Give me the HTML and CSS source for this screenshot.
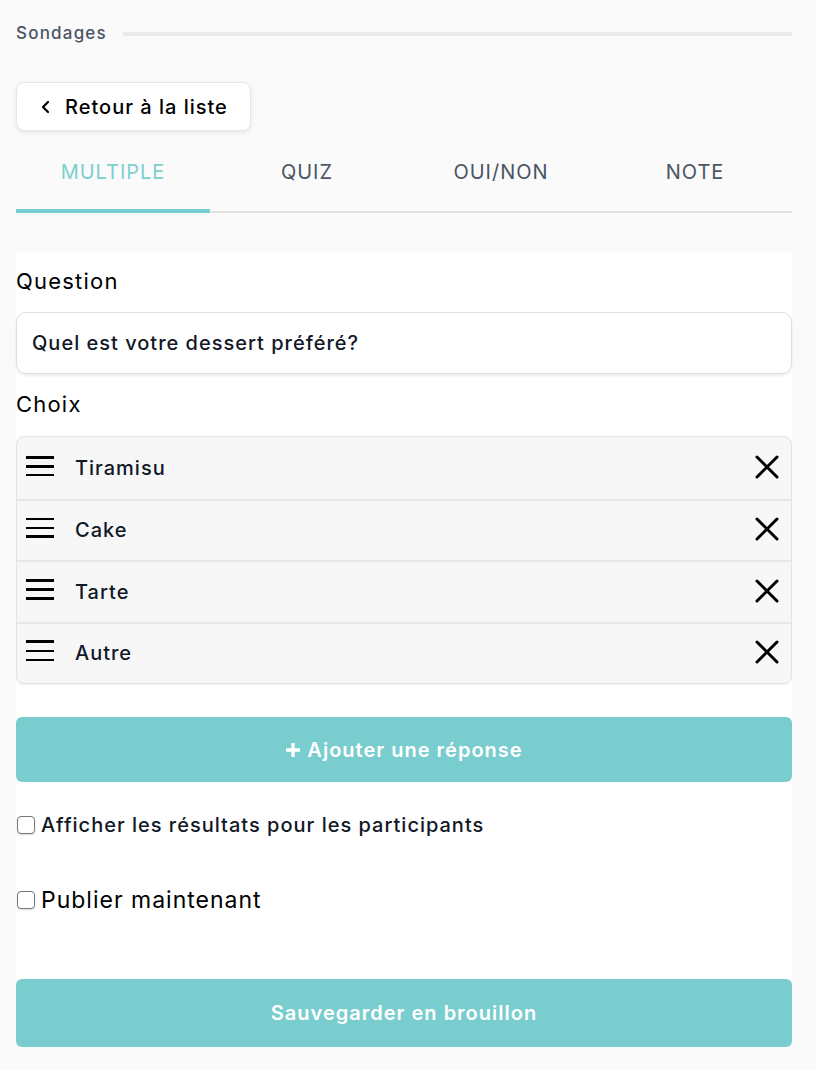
FILE: index.html
```html
<!DOCTYPE html>
<html lang="fr">
<head>
<meta charset="utf-8">
<link rel="stylesheet" href="styles.css">
</head>
<body>
<div class="page">
  <div class="section-head">
    <span class="section-title">Sondages</span>
    <span class="section-rule"></span>
  </div>

  <button class="back-btn">
    <svg width="12" height="14" viewBox="0 0 12 14"><path d="M8 2 L3 7 L8 12" fill="none" stroke="#000" stroke-width="2.2" stroke-linecap="round" stroke-linejoin="round"/></svg>
    <span>Retour à la liste</span>
  </button>

  <div class="tabs">
    <div class="tab active">MULTIPLE</div>
    <div class="tab">QUIZ</div>
    <div class="tab">OUI/NON</div>
    <div class="tab">NOTE</div>
  </div>

  <div class="panel">
    <div class="label">Question</div>
    <div class="input">Quel est votre dessert préféré?</div>
    <div class="label label-choix">Choix</div>
    <div class="choices">
      <div class="choice">
        <svg class="grip" width="28" height="24" viewBox="0 0 28 24"><rect x="0" y="4" width="28" height="3"/><rect x="0" y="13" width="28" height="3"/><rect x="0" y="22" width="28" height="2.5"/></svg>
        <span class="choice-text">Tiramisu</span>
        <svg class="close" width="24" height="24" viewBox="0 0 24 24"><path d="M2 2 L22 22 M22 2 L2 22" stroke="#000" stroke-width="3" stroke-linecap="round"/></svg>
      </div>
      <div class="choice">
        <svg class="grip" width="28" height="24" viewBox="0 0 28 24"><rect x="0" y="4" width="28" height="2"/><rect x="0" y="13" width="28" height="2"/><rect x="0" y="21" width="28" height="3"/></svg>
        <span class="choice-text">Cake</span>
        <svg class="close" width="24" height="24" viewBox="0 0 24 24"><path d="M2 2 L22 22 M22 2 L2 22" stroke="#000" stroke-width="3" stroke-linecap="round"/></svg>
      </div>
      <div class="choice">
        <svg class="grip" width="28" height="24" viewBox="0 0 28 24"><rect x="0" y="3" width="28" height="3"/><rect x="0" y="12" width="28" height="3"/><rect x="0" y="21" width="28" height="3"/></svg>
        <span class="choice-text">Tarte</span>
        <svg class="close" width="24" height="24" viewBox="0 0 24 24"><path d="M2 2 L22 22 M22 2 L2 22" stroke="#000" stroke-width="3" stroke-linecap="round"/></svg>
      </div>
      <div class="choice">
        <svg class="grip" width="28" height="24" viewBox="0 0 28 24"><rect x="0" y="3" width="28" height="3"/><rect x="0" y="13" width="28" height="2"/><rect x="0" y="22" width="28" height="2"/></svg>
        <span class="choice-text">Autre</span>
        <svg class="close" width="24" height="24" viewBox="0 0 24 24"><path d="M2 2 L22 22 M22 2 L2 22" stroke="#000" stroke-width="3" stroke-linecap="round"/></svg>
      </div>
    </div>

    <button class="teal-btn add-btn">
      <svg width="16" height="16" viewBox="0 0 16 16"><path d="M8 1 V15 M1 8 H15" stroke="#fff" stroke-width="3.4"/></svg>
      <span>Ajouter une réponse</span>
    </button>

    <label class="check check-1"><span class="box"></span><span>Afficher les résultats pour les participants</span></label>
    <label class="check check-2"><span class="box"></span><span>Publier maintenant</span></label>
  </div>

  <button class="teal-btn save-btn">Sauvegarder en brouillon</button>
</div>
</body>
</html>
```

FILE: styles.css
```css
* { box-sizing: border-box; }
html, body { margin: 0; padding: 0; }
body {
  background: #fafafa;
  font-family: Inter, "Noto Sans", sans-serif;
  color: #111827;
  letter-spacing: 1px;
}
.page {
  width: 776px;
  margin: 0 0 0 16px;
  padding-top: 22px;
}
.section-head {
  display: flex;
  align-items: center;
  gap: 16px;
  height: 22px;
}
.section-title {
  font-size: 17px;
  font-weight: 500;
  color: #4b5563;
  letter-spacing: 1.2px;
}
.section-rule {
  flex: 1;
  height: 4px;
  background: #e9eaec;
  margin-top: 2px;
}
.back-btn {
  margin-top: 38px;
  height: 49px;
  width: 235px;
  background: #fff;
  border: 1px solid #e6e6e6;
  border-radius: 8px;
  box-shadow: 0 2px 4px rgba(0,0,0,0.08);
  display: flex;
  align-items: center;
  gap: 13px;
  padding: 0 0 0 23px;
  font-family: Inter, sans-serif;
  font-size: 20px;
  font-weight: 500;
  letter-spacing: 1px;
  color: #000;
}
.tabs {
  display: grid;
  grid-template-columns: repeat(4, 1fr);
  border-bottom: 2px solid #e0e0e0;
}
.tab {
  height: 82px;
  display: flex;
  align-items: center;
  justify-content: center;
  font-size: 20px;
  color: #4b5563;
  padding-top: 4px;
  border-bottom: 4px solid transparent;
  margin-bottom: -2px;
}
.tab.active {
  color: #7ccfd0;
  border-bottom-color: #79cdcf;
}
.panel {
  background: #fff;
  margin-top: 39px;
  padding-top: 14px;
  padding-bottom: 67px;
}
.label {
  font-size: 22px;
  color: #000;
  line-height: 30px;
  letter-spacing: 1.2px;
}
.input {
  margin-top: 16px;
  height: 62px;
  border: 1px solid #dedede;
  border-radius: 10px;
  box-shadow: 0 2px 3px rgba(0,0,0,0.08);
  padding: 0 15px;
  display: flex;
  align-items: center;
  font-size: 20px;
  font-weight: 500;
  color: #111827;
}
.label-choix {
  margin-top: 15px;
}
.choices {
  margin-top: 17px;
  border: 1px solid #e3e3e3;
  border-radius: 8px;
  background: #f7f7f7;
  overflow: hidden;
  box-shadow: 0 1px 2px rgba(0,0,0,0.05);
}
.choice {
  height: 61.5px;
  display: flex;
  align-items: center;
  padding: 0 12px 0 9px;
  border-top: 2px solid #e8e8e8;
}
.choice:first-child { border-top: none; }
.grip { fill: #000; margin-top: -8px; }
.choice-text {
  margin-left: 21px;
  font-size: 20px;
  font-weight: 500;
  color: #111827;
  flex: 1;
}
.close { margin-top: -2px; }
.teal-btn {
  width: 776px;
  background: #79cdcf;
  border: none;
  border-radius: 6px;
  color: #fff;
  font-family: Inter, sans-serif;
  font-size: 20px;
  font-weight: 600;
  letter-spacing: 1px;
  display: flex;
  align-items: center;
  justify-content: center;
  gap: 6px;
}
.add-btn {
  margin-top: 33px;
  height: 65px;
}
.check {
  display: flex;
  align-items: center;
  gap: 6px;
  color: #111827;
}
.box {
  width: 18px;
  height: 18px;
  border: 1.5px solid #777;
  border-radius: 4px;
  background: #fff;
  box-shadow: 0 1px 2px rgba(0,0,0,0.15);
  margin-left: 1px;
  flex: none;
}
.check-1 {
  margin-top: 31px;
  font-size: 20px;
  font-weight: 500;
  height: 24px;
}
.check-2 {
  margin-top: 51px;
  font-size: 23px;
  font-weight: 400;
  height: 24px;
  color: #000;
}
.save-btn {
  height: 68px;
}
```
